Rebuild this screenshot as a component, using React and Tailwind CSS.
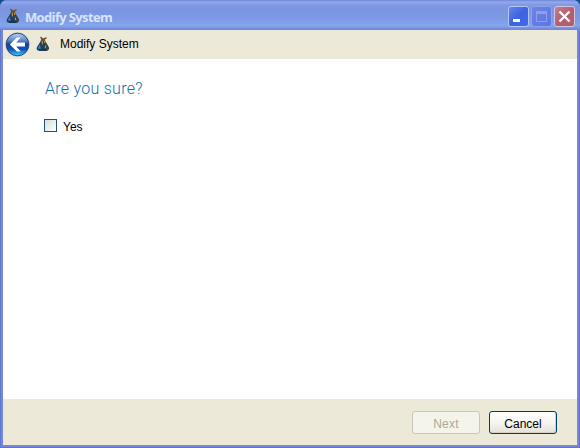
function FlaskIcon() {
  return (
    <svg width="14" height="16" viewBox="0 0 14 16" className="shrink-0">
      <path d="M4.5 5.5 5.5 2.5h3l1 3 3.3 5.5c.8 2.2-.6 3.8-2.5 3.8H3.5C1 14.8 0 13 1 11z" fill="#1d3f60" />
      <path d="m9 6 3.3 5.5c.6 2-.6 3-2 3H9z" fill="#494236" />
      <path d="M1.6 12.5 3.8 8.5l1 4.2z" fill="#4084b8" />
      <path d="M4.5 1.2 8.5 5M5.5 4.8 10.5 1.6" stroke="#755329" strokeWidth="1.6" />
      <path d="M6.3 5v3.5M8.7 5v2M9.4 9.5v2.5" stroke="#d3a544" strokeWidth="1" />
      <path d="M3 14.2h7.5" stroke="#142c46" strokeWidth="1.2" />
    </svg>
  );
}

function BackButton() {
  return (
    <button aria-label="Back" className="block h-[26px] w-[26px] shrink-0">
      <svg width="26" height="26" viewBox="0 0 26 26">
        <defs>
          <linearGradient id="orb" x1="0" y1="0" x2="0" y2="1">
            <stop offset="0" stopColor="#bdd3ee" />
            <stop offset=".35" stopColor="#5580c6" />
            <stop offset=".48" stopColor="#153f9d" />
            <stop offset=".72" stopColor="#0d53bd" />
            <stop offset="1" stopColor="#3fd6ff" />
          </linearGradient>
        </defs>
        <circle cx="12.5" cy="12.5" r="12.2" fill="#c5cad3" />
        <circle cx="12.5" cy="12.5" r="11.3" fill="url(#orb)" stroke="#274879" strokeWidth="1" />
        <path d="M4.8 12.5 11.8 5.5h4l-4.6 5H20v4h-8.8l4.6 5h-4z" fill="#fff" />
      </svg>
    </button>
  );
}

function CaptionButtons() {
  return (
    <div className="ml-auto flex gap-[2px]">
      <button aria-label="Minimize" className="h-[21px] w-[21px] rounded-[3px] border border-[#b7c5f5] bg-linear-to-br from-[#6586ed] via-[#3c62df] to-[#3f6cf0]">
        <svg width="19" height="19"><path d="M4 12h7v3H4z" fill="#fff" /></svg>
      </button>
      <button aria-label="Maximize" className="h-[21px] w-[21px] rounded-[3px] border border-[#8fa1ec] bg-linear-to-br from-[#6b83e3] to-[#5d77e4]">
        <svg width="19" height="19"><path d="M4.5 5v9.5h10V5" fill="none" stroke="#8e9eea" /><path d="M4 4h11v3H4z" fill="#8e9eea" /></svg>
      </button>
      <button aria-label="Close" className="h-[21px] w-[21px] rounded-[3px] border border-[#d2c5e2] bg-linear-to-br from-[#c28090] via-[#b3606d] to-[#ac606b]">
        <svg width="19" height="19"><path d="m4.5 4.5 10 10m0-10-10 10" stroke="#fff" strokeWidth="2.3" /></svg>
      </button>
    </div>
  );
}

export default function App() {
  return (
    <div className="h-[448px] w-[580px] bg-[#164a8c]">
      <main className="flex h-full flex-col overflow-hidden rounded-t-[7px] bg-[#7487db] px-[3px] pb-[3px] font-['Liberation_Sans',sans-serif] text-xs text-black shadow-[inset_1px_0_#6377cf,inset_-1px_-1px_#6074cf]">
        <header className="-mx-[3px] flex h-[30px] shrink-0 items-center bg-[linear-gradient(180deg,#6f86d8_0,#91a9ec_2px,#8199e2_5px,#7b94df_10px,#7f9be6_20px,#82a7ed_26px,#7892df_28px,#6d83d5_30px)] pt-[2px] pr-[5px] pl-[6px]">
          <FlaskIcon />
          <h1 className="mt-[2px] ml-[5px] font-['Open_Sans',sans-serif] text-[13px] leading-4 font-bold tracking-[-0.64px] whitespace-nowrap text-[#d8e4f8]">Modify System</h1>
          <CaptionButtons />
        </header>
        <nav className="flex h-[29px] shrink-0 items-center bg-[#ece9d8] pl-[2px]">
          <BackButton />
          <div className="mb-[2px] ml-[5px]"><FlaskIcon /></div>
          <span className="mb-[2px] ml-[10px] whitespace-nowrap">Modify System</span>
        </nav>
        <section className="flex-1 bg-white pt-[20px] pl-[41px]">
          <h2 className="ml-px font-['Roboto',sans-serif] text-base leading-5 font-light tracking-[0.27px] text-[#1370ab]">Are you sure?</h2>
          <label className="mt-[19px] flex h-[15px] items-center">
            <input type="checkbox" className="h-[13px] w-[13px] appearance-none border border-[#1c5180] bg-linear-to-br from-[#dcdcd7] to-white" />
            <span className="mt-[2px] ml-[6px]">Yes</span>
          </label>
        </section>
        <footer className="flex h-[46px] shrink-0 justify-end gap-[9px] bg-[#ece9d8] pt-[12px] pr-[20px]">
          <button disabled className="h-[23px] w-[68px] rounded-[3px] border border-[#c9c7ba] bg-[#f5f4ea] pt-[3px] tracking-[0.2px] text-[#aca899]">Next</button>
          <button className="h-[23px] w-[68px] rounded-[3px] border border-[#003c74] bg-linear-to-b from-white via-[#f6f5f0] to-[#e5e1d8] pt-[3px] shadow-[inset_-1px_-1px_#d6d0c5]">Cancel</button>
        </footer>
      </main>
    </div>
  );
}
